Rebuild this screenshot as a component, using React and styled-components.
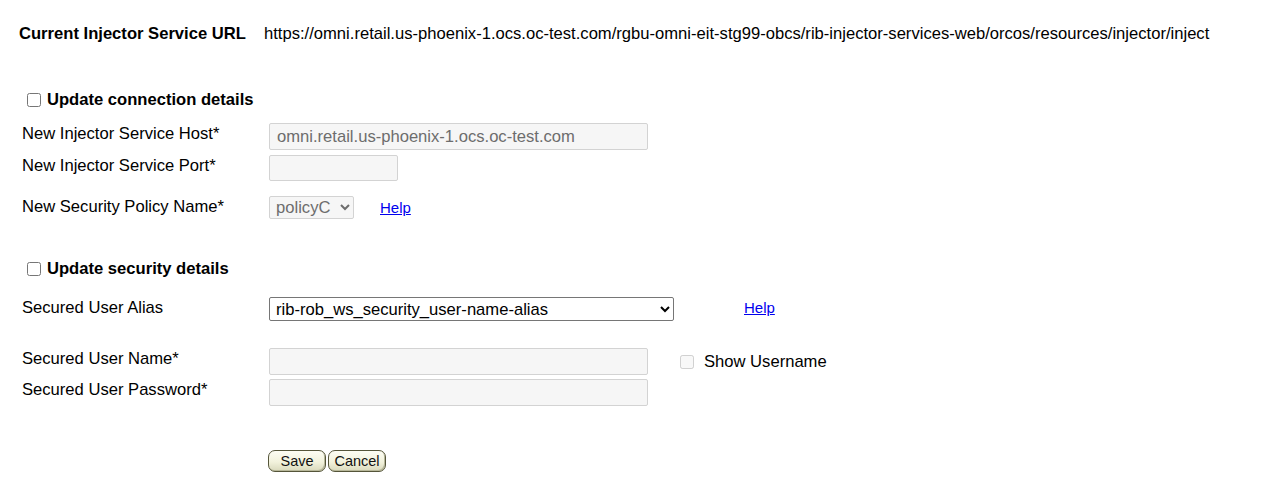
import React from 'react'
import styled, { createGlobalStyle } from 'styled-components'

const Global = createGlobalStyle`
  html, body { margin: 0; padding: 0; background: #fff; }
  body { font-family: "Liberation Sans", Arial, sans-serif; color: #000; }
`

const Page = styled.div`
  width: 1285px;
  height: 482px;
  overflow: hidden;
`

const Header = styled.div`
  display: flex;
  margin-top: 25px;
  padding-left: 19px;
  height: 18px;
  line-height: 18px;
  font-size: 16.6px;
`

const HeaderLabel = styled.div`
  width: 245px;
  font-weight: bold;
`

const Section = styled.div`
  padding-left: 22px;
`

const Heading = styled.label`
  display: flex;
  align-items: center;
  margin-top: ${p => p.$top}px;
  height: 18px;
  font-size: 16.6px;
  font-weight: bold;
`

const Check = styled.input.attrs({ type: 'checkbox' })`
  width: 14px;
  height: 14px;
  margin: ${p => p.$m || '0 6px 0 5px'};
`

const Row = styled.div`
  display: flex;
  align-items: flex-start;
  margin-top: ${p => p.$top}px;
  height: ${p => p.$h}px;
`

const Label = styled.div`
  width: 247px;
  flex: none;
  padding-top: 2px;
  font-size: 16.6px;
  line-height: 18px;
`

const TextInput = styled.input`
  box-sizing: border-box;
  width: ${p => p.$w}px;
  height: ${p => p.$h || 27}px;
  margin: 0;
  padding: 0 7px;
  font-family: "Liberation Sans", Arial, sans-serif;
  font-size: 16.6px;
  color: #6d6d6d;
  background: #f6f6f6;
  border: 1px solid #d3d3d3;
  border-radius: 2px;
  &:disabled { color: #6d6d6d; opacity: 1; }
`

const Select = styled.select`
  box-sizing: border-box;
  width: ${p => p.$w}px;
  height: ${p => p.$h}px;
  margin: 0;
  padding: 0 2px;
  font-family: "Liberation Sans", Arial, sans-serif;
  font-size: 16.6px;
  color: #000;
  background: #fff;
  border: 1px solid #767676;
  border-radius: 2px;
  &:disabled {
    color: #6d6d6d;
    background: #f6f6f6;
    border-color: #d3d3d3;
    opacity: 1;
  }
`

const HelpLink = styled.a`
  margin-left: ${p => p.$ml}px;
  margin-top: ${p => p.$mt}px;
  font-size: 15px;
  line-height: 18px;
  color: #0000ee;
  text-decoration: underline;
`

const Aside = styled.label`
  display: flex;
  align-items: center;
  margin-left: 32px;
  margin-top: 5px;
  font-size: 16.6px;
  line-height: 18px;
`

const Buttons = styled.div`
  display: flex;
  gap: 2px;
  margin-top: 44px;
  padding-left: 268px;
`

const Button = styled.button`
  box-sizing: border-box;
  width: ${p => p.$w}px;
  height: 22px;
  padding: 0;
  font-family: "Liberation Sans", Arial, sans-serif;
  font-size: 14.5px;
  color: #111;
  background: linear-gradient(#fdfdf4, #f2f2dc 55%, #d9d9bc);
  border: 1px solid #55553a;
  border-radius: 7px;
  box-shadow: inset -1px -1px 0 #b8b89a;
`

export default function App() {
  return (
    <Page>
      <Global />
      <Header>
        <HeaderLabel>Current Injector Service URL</HeaderLabel>
        <div>https://omni.retail.us-phoenix-1.ocs.oc-test.com/rgbu-omni-eit-stg99-obcs/rib-injector-services-web/orcos/resources/injector/inject</div>
      </Header>

      <Section>
        <Heading $top={48}>
          <Check />
          Update connection details
        </Heading>
        <Row $top={14} $h={27}>
          <Label>New Injector Service Host*</Label>
          <TextInput $w={379} disabled defaultValue="omni.retail.us-phoenix-1.ocs.oc-test.com" />
        </Row>
        <Row $top={5} $h={26}>
          <Label>New Injector Service Port*</Label>
          <TextInput $w={129} $h={26} disabled />
        </Row>
        <Row $top={15} $h={22}>
          <Label>New Security Policy Name*</Label>
          <Select $w={85} $h={23} disabled defaultValue="policyC">
            <option>policyC</option>
          </Select>
          <HelpLink href="#" $ml={26} $mt={3}>Help</HelpLink>
        </Row>

        <Heading $top={42}>
          <Check />
          Update security details
        </Heading>
        <Row $top={19} $h={23}>
          <Label>Secured User Alias</Label>
          <Select $w={405} $h={24} defaultValue="rib-rob_ws_security_user-name-alias">
            <option>rib-rob_ws_security_user-name-alias</option>
          </Select>
          <HelpLink href="#" $ml={70} $mt={2}>Help</HelpLink>
        </Row>
        <Row $top={28} $h={27}>
          <Label>Secured User Name*</Label>
          <TextInput $w={379} disabled />
          <Aside>
            <Check disabled $m="0 10px 0 0" />
            Show Username
          </Aside>
        </Row>
        <Row $top={4} $h={27}>
          <Label>Secured User Password*</Label>
          <TextInput $w={379} type="password" disabled />
        </Row>
      </Section>

      <Buttons>
        <Button $w={58}>Save</Button>
        <Button $w={58}>Cancel</Button>
      </Buttons>
    </Page>
  )
}
